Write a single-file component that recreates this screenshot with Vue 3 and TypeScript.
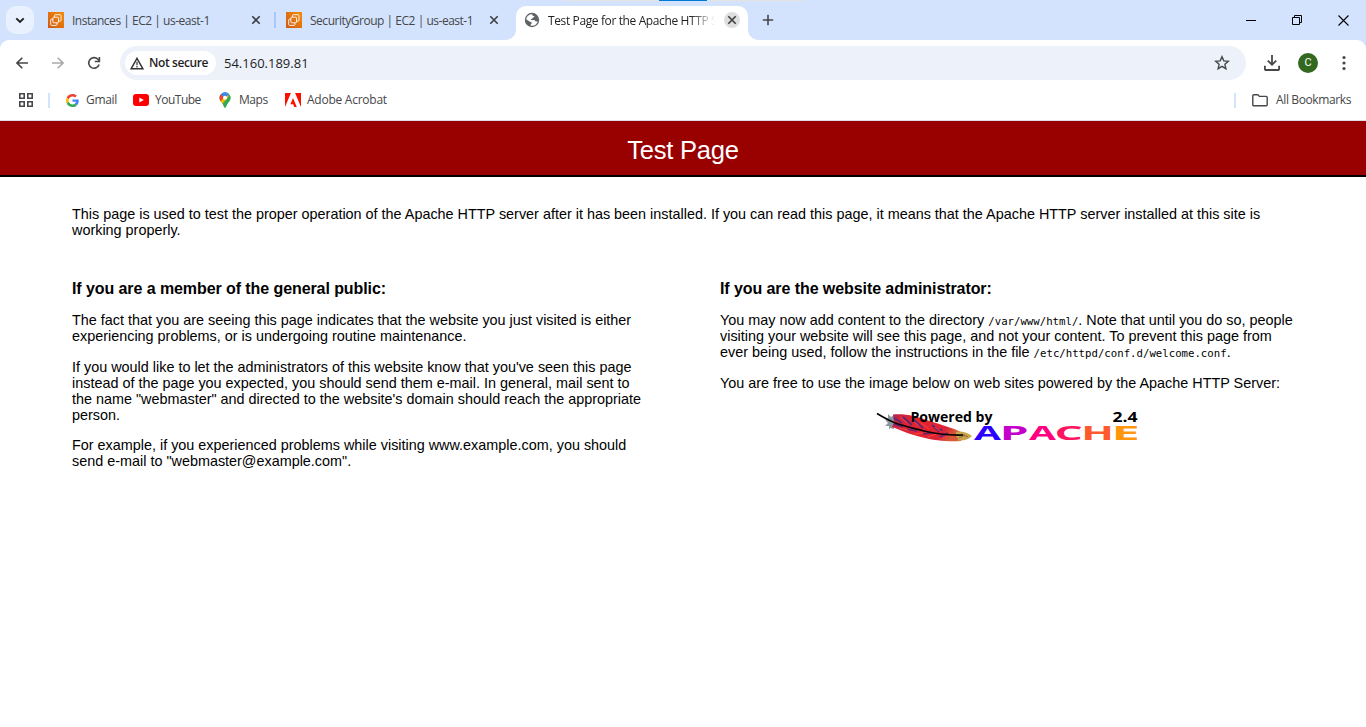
<script setup lang="ts">
interface Tab {
  title: string
  kind: 'aws' | 'globe'
  active: boolean
  cls: string
}

const tabs: Tab[] = [
  { title: 'Instances | EC2 | us-east-1', kind: 'aws', active: false, cls: 'first' },
  { title: 'SecurityGroup | EC2 | us-east-1', kind: 'aws', active: false, cls: 'second' },
  { title: 'Test Page for the Apache HTTP S', kind: 'globe', active: true, cls: 'third' },
]

const logoLetters = [
  { ch: 'A', x: 974, w: 27, fill: '#2b00ff' },
  { ch: 'P', x: 1004, w: 23, fill: '#c400cc' },
  { ch: 'A', x: 1029, w: 27, fill: '#ff0080' },
  { ch: 'C', x: 1057, w: 24, fill: '#ff1462' },
  { ch: 'H', x: 1085, w: 25, fill: '#ff5a2d' },
  { ch: 'E', x: 1116, w: 19.5, fill: '#ff960c' },
]
const glyph: Record<string, [number, number]> = {
  A: [0, 0.69], P: [0.09, 0.5], C: [0.057, 0.54], H: [0.09, 0.585], E: [0.09, 0.385],
}
const size = 18.8
function place(l: { ch: string; x: number; w: number }): string {
  const [lsb, w] = glyph[l.ch]
  const sx = l.w / (w * size)
  return `translate(${(l.x - 876 - lsb * size * sx).toFixed(2)} 31.4) scale(${sx.toFixed(3)} 1)`
}
</script>

<template>
  <div class="window">
    <header class="tabstrip">
      <div class="edge"><i></i></div>
      <button class="search" aria-label="Search tabs">
        <svg width="10" height="7" viewBox="0 0 10 7"><path d="M1.3 1.3 5 5l3.7-3.7" fill="none" stroke="#1f1f1f" stroke-width="1.9" /></svg>
      </button>
      <div v-for="t in tabs" :key="t.title" class="tab" :class="[t.cls, { active: t.active }]">
        <svg v-if="t.kind === 'aws'" class="fav" width="16" height="16" viewBox="0 0 16 16">
          <defs><linearGradient id="aws" x1="0" y1="1" x2="1" y2="0"><stop offset="0" stop-color="#cf5a17" /><stop offset="1" stop-color="#f58c08" /></linearGradient></defs>
          <rect width="16" height="16" fill="url(#aws)" />
          <g fill="none" stroke="#fff" stroke-width=".9">
            <path d="M6.500 5V3.400c0-.4.300-.700.700-.700h5.100c.4 0 .700.300.700.700v5c0 .4-.3.700-.7.700h-1.700" />
            <rect x="4.900" y="5.200" width="5.600" height="5.600" rx=".8" />
            <path d="M4.900 7.200H3.400a.7.7 0 0 0-.7.7v4.800c0 .4.3.7.7.7h4.800c.4 0 .7-.3.7-.7v-1.900" />
          </g>
        </svg>
        <svg v-else class="fav" width="16" height="16" viewBox="0 0 16 16">
          <circle cx="8" cy="8" r="7.200" fill="#5f6368" />
          <path d="M8.300 2.200c-.2 1.300.4 1.800 1.500 1.700.8 0 .7 1-.1 1.300-1 .3-.8 1.400-2 1.500-1 0-1.200 1.100-.2 1.400h2.700c.9.200.8 1.400 1.800 1.500.8 0 1.300-.3 1.900-.7-.7 2.600-2.800 4.800-5.600 4.800-.7 0-1.300-.1-1.800-.3.100-1.200.7-1.500 1.200-2 .3-.6-.3-1.200-1-1.400C5.300 9.700 3.300 8.200 2.200 7.300 2.500 4.500 5 2 8.300 2.200z" fill="#fff" />
        </svg>
        <span class="title">{{ t.title }}</span>
        <span class="close">
          <svg width="10" height="10" viewBox="0 0 10 10"><path d="m1.300 1.300 7.400 7.400m0-7.400L1.300 8.700" stroke="#3c3e41" stroke-width="1.600" /></svg>
        </span>
      </div>
      <svg class="plus" width="12" height="12" viewBox="0 0 12 12"><path d="M6 .800v10.400M.800 6h10.400" stroke="#454749" stroke-width="1.600" /></svg>
      <div class="controls">
        <svg width="10" height="10" viewBox="0 0 10 10"><path d="M0 5.500h10" stroke="#000" /></svg>
        <svg width="10" height="10" viewBox="0 0 10 10"><path d="M.5 2.500h7v7h-7zM2.500 2.500v-2h7v7h-2" fill="none" stroke="#000" /></svg>
        <svg width="11" height="11" viewBox="0 0 11 11"><path d="m.5.5 10 10m0-10-10 10" stroke="#000" stroke-width="1.100" /></svg>
      </div>
    </header>

    <div class="chrome">
      <div class="toolbar">
        <svg class="back" width="12" height="12" viewBox="0 0 12 12"><path d="M12 6H1.200M6.300.7 1 6l5.300 5.300" fill="none" stroke="#454749" stroke-width="1.600" /></svg>
        <svg class="forward" width="12" height="12" viewBox="0 0 12 12"><path d="M0 6h10.800M5.700.7 11 6l-5.300 5.300" fill="none" stroke="#a9abad" stroke-width="1.600" /></svg>
        <svg class="reload" width="14" height="14" viewBox="0 0 14 14"><path d="M12.100 8.500a5.300 5.300 0 1 1-1.200-5.200l1.300 1.500" fill="none" stroke="#454749" stroke-width="1.600" /><path d="M12.400.9v4.600H7.800" fill="none" stroke="#454749" stroke-width="1.600" /></svg>
        <div class="omnibox">
          <div class="chip">
            <svg width="14" height="13" viewBox="0 0 14 13"><path d="M7 1.300 12.900 11.800H1.100z" fill="none" stroke="#333" stroke-width="1.400" /><path d="M7 4.800v3.500m0 .8v1.300" stroke="#333" stroke-width="1.200" /></svg>
            <span>Not secure</span>
          </div>
          <span class="url">54.160.189.81</span>
          <svg class="star" width="16" height="16" viewBox="0 0 16 16"><path d="m8 1.700 1.800 4.200 4.500.4-3.400 3 1 4.400L8 11.400l-3.900 2.300 1-4.400-3.400-3 4.500-.4z" fill="none" stroke="#454749" stroke-width="1.400" /></svg>
        </div>
        <svg class="download" width="16" height="16" viewBox="0 0 16 16"><path d="M8 0v9.500M3.800 5.600 8 9.800l4.200-4.200M.9 10.700v3.500c0 .5.300.8.800.8h12.600c.5 0 .8-.3.8-.8v-3.500" fill="none" stroke="#454749" stroke-width="1.800" /></svg>
        <span class="avatar">C</span>
        <svg class="dots" width="4" height="16" viewBox="0 0 4 16" fill="#454749"><circle cx="2" cy="2.500" r="1.600" /><circle cx="2" cy="8" r="1.600" /><circle cx="2" cy="13.500" r="1.600" /></svg>
      </div>

      <div class="bookmarks">
        <svg class="apps" width="14" height="14" viewBox="0 0 14 14" fill="none" stroke="#454749" stroke-width="1.600"><path d="M.8.8h4.400v4.400H.8zM8.800.8h4.400v4.400H8.800zM.8 8.800h4.400v4.400H.8zM8.800 8.800h4.400v4.400H8.800z" /></svg>
        <i class="bar"></i>
        <svg class="google" width="13" height="13" viewBox="0 0 48 48"><path fill="#ea4335" d="M24 9.500c3.540 0 6.710 1.220 9.210 3.600l6.850-6.850C35.900 2.380 30.470 0 24 0 14.620 0 6.510 5.380 2.560 13.220l7.980 6.190C12.430 13.720 17.740 9.500 24 9.500z" /><path fill="#4285f4" d="M46.980 24.550c0-1.570-.15-3.090-.38-4.550H24v9.020h12.940c-.58 2.960-2.260 5.480-4.780 7.180l7.730 6c4.510-4.180 7.090-10.360 7.090-17.650z" /><path fill="#fbbc05" d="M10.530 28.590c-.48-1.450-.76-2.990-.76-4.590s.27-3.140.76-4.590l-7.980-6.190C.92 16.460 0 20.120 0 24s.92 7.540 2.560 10.780z" /><path fill="#34a853" d="M24 48c6.480 0 11.930-2.130 15.890-5.810l-7.730-6c-2.150 1.450-4.920 2.300-8.160 2.300-6.260 0-11.570-4.220-13.470-9.910l-7.980 6.190C6.510 42.620 14.620 48 24 48z" /></svg>
        <span class="gmail">Gmail</span>
        <svg class="youtube" width="16" height="12" viewBox="0 0 16 12"><rect width="16" height="12" rx="3" fill="#f00" /><path d="m6.300 3.400 4.500 2.600-4.500 2.600z" fill="#fff" /></svg>
        <span class="yt">YouTube</span>
        <svg class="map" width="12" height="16" viewBox="0 0 12 16">
          <defs><clipPath id="pin"><path d="M6 .3a5.500 5.500 0 0 1 5.500 5.500c0 3.100-2 3.900-3.300 6.100C7.200 13.600 7 15.700 6 15.700s-1.200-2.100-2.200-3.800C2.500 9.700.5 8.900.5 5.800A5.500 5.500 0 0 1 6 .3z" /></clipPath></defs>
          <g clip-path="url(#pin)"><path fill="#34a853" d="M0 0h12v16H0z" /><path fill="#fbbc04" d="M0 9.800 8.500 0 10 7 3.500 14z" /><path fill="#ea4335" d="M0 1.500 2 2l3.200 3L1.500 9.500 0 8z" /><path fill="#4285f4" d="M1.700 2.200 5-1h7L7 5.600 5 5z" /><path fill="#34a853" d="M11 3h1v8l-6 5-3-3.700z" /></g>
          <circle cx="6" cy="5.800" r="2" fill="#fff" />
        </svg>
        <span class="maps">Maps</span>
        <svg class="adobe" width="16" height="14" viewBox="0 0 16 14" fill="#fa0f00"><path d="M0 0h5.900L0 14zM10.100 0H16v14zM8 5.100 11.800 14H9.300l-1.100-2.800H5.400z" /></svg>
        <span class="acrobat">Adobe Acrobat</span>
        <i class="bar right"></i>
        <svg class="folder" width="16" height="13" viewBox="0 0 16 13"><path d="M1.800.8h4l1.600 1.600h6.800c.5 0 1 .4 1 1v7.400c0 .5-.5 1-1 1H1.800c-.5 0-1-.5-1-1v-9c0-.6.5-1 1-1z" fill="none" stroke="#454749" stroke-width="1.400" /></svg>
        <span class="all">All Bookmarks</span>
      </div>
    </div>

    <main>
      <h1><span>Test Page</span></h1>
      <div class="content">
        <p class="intro">This page is used to test the proper operation of the Apache HTTP server after it has been installed. If you can read this page, it means that the Apache HTTP server installed at this site is<br>working properly.</p>
        <div class="columns">
          <section>
            <h2>If you are a member of the general public:</h2>
            <p>The fact that you are seeing this page indicates that the website you just visited is either<br>experiencing problems, or is undergoing routine maintenance.</p>
            <p class="tight">If you would like to let the administrators of this website know that you've seen this page<br>instead of the page you expected, you should send them e-mail. In general, mail sent to<br>the name "webmaster" and directed to the website's domain should reach the appropriate<br>person.</p>
            <p>For example, if you experienced problems while visiting www.example.com, you should<br>send e-mail to "webmaster@example.com".</p>
          </section>
          <section>
            <h2>If you are the website administrator:</h2>
            <p>You may now add content to the directory <code>/var/www/html/</code>. Note that until you do so, people<br>visiting your website will see this page, and not your content. To prevent this page from<br>ever being used, follow the instructions in the file <code>/etc/httpd/conf.d/welcome.conf</code>.</p>
            <p>You are free to use the image below on web sites powered by the Apache HTTP Server:</p>
            <svg class="powered" width="264" height="34" viewBox="0 0 264 34">
              <defs>
                <linearGradient id="feather" x1="0" x2="1" y1="0" y2=".3"><stop offset="0" stop-color="#a02858" /><stop offset=".15" stop-color="#d0243c" /><stop offset=".5" stop-color="#e3242f" /><stop offset=".85" stop-color="#dc2236" /><stop offset="1" stop-color="#d95a35" /></linearGradient>
              </defs>
              <path d="m9 9 3 0 0-4 3 3 3-2v14l-4-1-1 2 0-4-4 0 3-3-2-2z" fill="#8b989f" />
              <path d="M17 5.500c13-1 24 2 35 6 12 4 24 7 34 12l-1 8.500c-10 1-26 0-40-4-9-2-17-5-26-9l-3-1 2-5z" fill="url(#feather)" />
              <g fill="none" stroke="#602678" stroke-width="1.700"><path d="m18 9 8 5m1-6 9 8m2-5 9 8m9-3 7 6M18 15l9 3m4 2 10 2m6 3 8-1m9 4 8-4M66 20l-4 3" /></g>
              <g fill="none" stroke="#f9423e" stroke-width="1"><path d="m24 8 7 6m4-4 8 7m2-3 8 6m6-2 6 5M23 19l9 2m6 4 9-1m5 4 9-3m5 5 8-3" /></g>
              <path d="M80 23c5-1 9 0 13 2l3 2c-3 3.500-9 5-15 4.500 2-1.500 1-2.500-1-4z" fill="#c9a64b" />
              <path d="m83 29 6-3m-4-1 7 3" stroke="#7d5b2c" stroke-width=".8" />
              <path d="M1 4.500c5 3 10 6 16 8.500 9 4 20 6 31 9 12 3 24 4.500 39 4" fill="none" stroke="#080307" stroke-width="1.700" />
              <text x="34.500" y="12.700" textLength="82" lengthAdjust="spacingAndGlyphs" class="small">Powered by</text>
              <text x="236.500" y="12.800" textLength="25" lengthAdjust="spacingAndGlyphs" class="version">2.4</text>
              <text v-for="l in logoLetters" :key="l.x" :transform="place(l)" :fill="l.fill" :font-size="size" class="letter">{{ l.ch }}</text>
            </svg>
          </section>
        </div>
      </div>
    </main>
  </div>
</template>

<style>
html, body { margin: 0; background: #fff; overflow: hidden; }
</style>

<style scoped>
* { box-sizing: border-box; }
.window { width: 1366px; height: 727px; overflow: hidden; background: #fff; font-family: "Open Sans", "Noto Sans", sans-serif; font-size: 12px; color: #454749; }
svg { display: block; flex: none; }
span { white-space: nowrap; }
.tabstrip { position: relative; height: 40px; background: #d3e3fd; display: flex; align-items: flex-start; padding-left: 6px; }
.edge { position: absolute; left: 563px; top: 0; width: 241px; height: 1px; background: #e3e3e3; }
.edge i { display: block; width: 48px; height: 1px; margin-left: 96px; background: #0078d4; }
.search { width: 28px; height: 28px; margin-top: 6px; border: 0; padding: 0; border-radius: 10px; background: #e9f1fe; display: flex; align-items: center; justify-content: center; }
.tab { height: 34px; margin-top: 6px; display: flex; align-items: center; padding: 0 8px 6px; }
.first { width: 240px; margin-left: 6px; position: relative; }
.first::after { content: ""; position: absolute; right: 4px; top: 6px; width: 2px; height: 16px; background: #a8c7fa; }
.second { width: 236px; margin-left: -2px; }
.third { width: 232px; margin-left: 2px; }
.title { flex: 1; margin-left: 8px; line-height: 20px; padding-top: 1px; }
.first .title, .second .title { letter-spacing: -.48px; }
.close { width: 16px; height: 16px; border-radius: 50%; display: flex; align-items: center; justify-content: center; }
.first .close { margin-right: 8px; }
.second .close { margin-right: 4px; }
.active { position: relative; background: #fff; border-radius: 10px 10px 0 0; color: #1f1f1f; }
.active::before, .active::after { content: ""; position: absolute; bottom: 0; width: 10px; height: 10px; }
.active::before { left: -10px; background: radial-gradient(circle at 0 0, #0000 9.500px, #fff 10px); }
.active::after { right: -10px; background: radial-gradient(circle at 100% 0, #0000 9.500px, #fff 10px); }
.active .title { flex: none; width: 168px; overflow: hidden; letter-spacing: -.38px; -webkit-mask-image: linear-gradient(90deg, #000 142px, #0000 167px); mask-image: linear-gradient(90deg, #000 142px, #0000 167px); }
.active .close { margin-left: 8px; background: #dedede; }
.plus { margin: 14px 0 0 14px; }
.controls { margin: 15px 17px 0 auto; display: flex; gap: 36px; }
.chrome { height: 81px; background: linear-gradient(#d3e3fd 12px, #fff 12px); border-bottom: 1px solid #dcdee1; }
.toolbar { height: 46px; background: #fff; border-radius: 9px 9px 0 0; display: flex; align-items: center; padding-left: 16px; }
.forward { margin-left: 24px; }
.reload { margin-left: 23px; }
.omnibox { width: 1126px; height: 34px; margin-left: 19px; border-radius: 17px; background: #ecf1fa; display: flex; align-items: center; padding: 0 16px 0 5px; }
.chip { width: 91px; height: 24px; background: #fff; border-radius: 12px; display: flex; align-items: center; padding-left: 5px; color: #1f1f1f; font-weight: 600; }
.chip span { margin-left: 5px; margin-top: -1px; letter-spacing: -.4px; }
.url { margin-left: 8px; color: #1f1f1f; font-size: 13px; }
.star { margin-left: auto; }
.download { margin-left: 18px; }
.avatar { width: 20px; height: 20px; margin-left: 18px; border-radius: 50%; background: #33691e; color: #fff; font: 11px/20px Roboto, sans-serif; text-align: center; }
.dots { margin-left: 24px; }
.bookmarks { height: 28px; display: flex; align-items: center; padding-left: 19px; }
.bookmarks span { margin-top: -1px; }
.bar { width: 2px; height: 15px; margin-left: 15px; background: #d3e3fd; }
.google { margin-left: 16px; }
.gmail { width: 31px; margin-left: 7px; letter-spacing: -.3px; }
.youtube { margin-left: 16px; }
.yt { width: 47px; margin-left: 6px; letter-spacing: -.5px; }
.map { margin-left: 17px; }
.maps { width: 30px; margin-left: 8px; letter-spacing: -.45px; }
.adobe { margin-left: 16px; }
.acrobat { margin-left: 6px; letter-spacing: -.25px; }
.bar.right { margin-left: auto; }
.folder { margin-left: 16px; }
.all { width: 76px; margin-left: 8px; margin-right: 14px; letter-spacing: -.37px; }
main { font-family: "Liberation Sans", Arial, sans-serif; color: #000; font-size: 14.400px; line-height: 16px; }
h1 { margin: 0; height: 56px; background: #900; border-bottom: 2px solid #000; color: #fff; font-size: 25.600px; letter-spacing: -.25px; font-weight: 400; line-height: 59px; text-align: center; }
.content { padding: 29px 72px 0; }
p { margin: 0 0 15px; white-space: nowrap; }
.tight { margin-bottom: 14px; }
.columns { display: grid; grid-template-columns: 648px 1fr; margin-top: 42px; }
h2 { margin: 0 0 15px; font-size: 16px; line-height: 17px; letter-spacing: -.08px; }
code { font: 10.700px/12px "DejaVu Sans Mono", monospace; }
.powered { margin: 18px 0 0 156px; }
.small, .version, .letter { font-family: "Open Sans", sans-serif; font-weight: 700; }
.small, .version { font-size: 15px; }
</style>
